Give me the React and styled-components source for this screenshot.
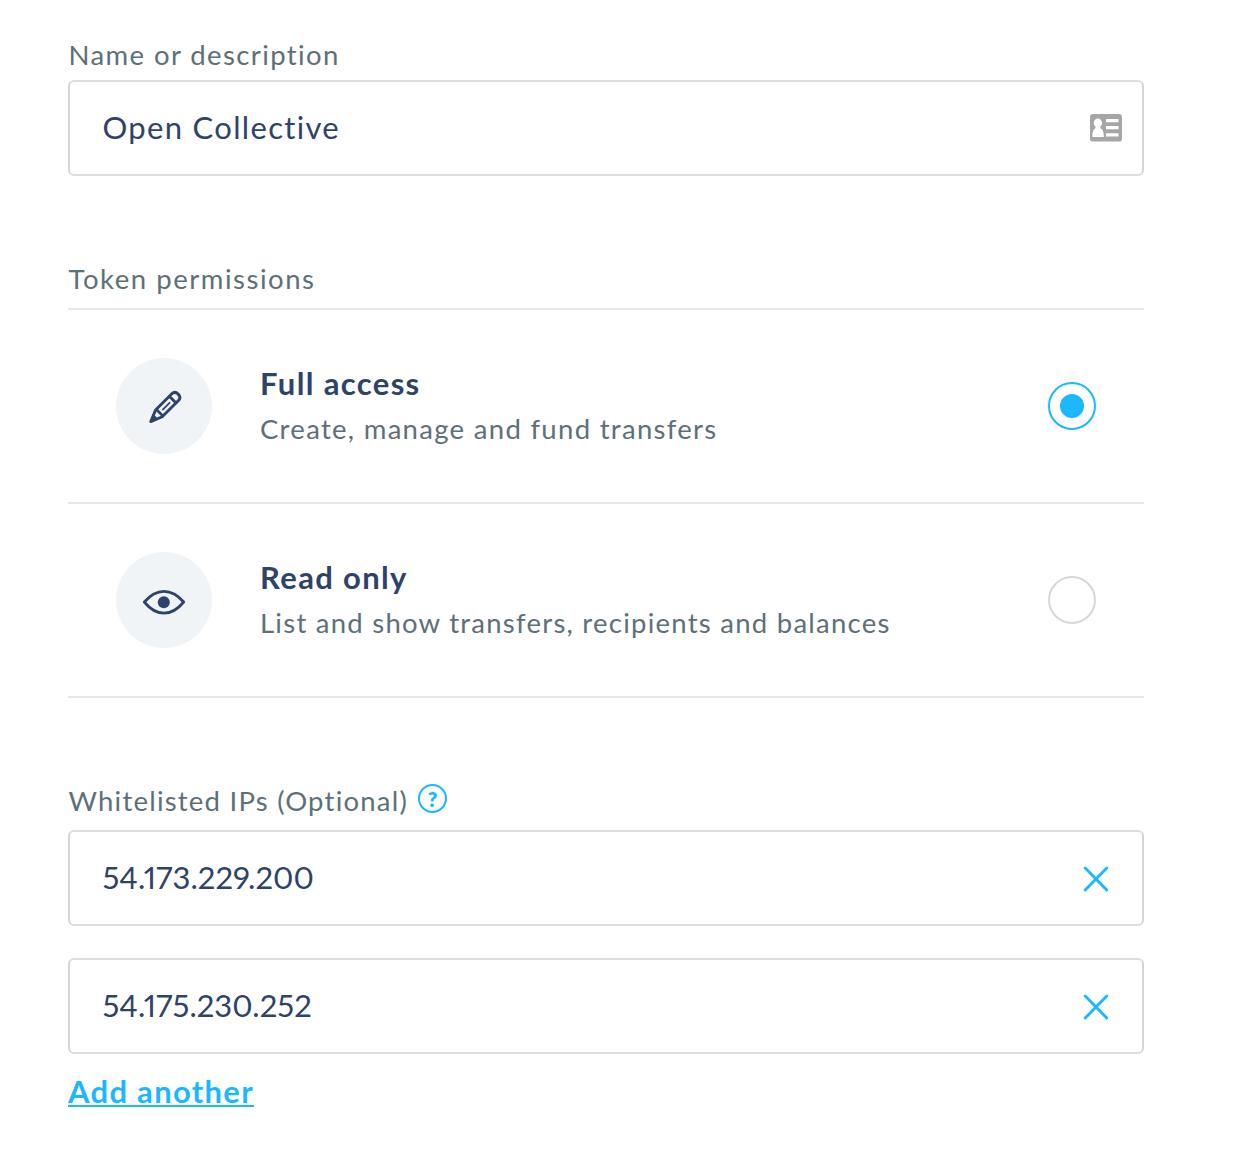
import React, { useState } from 'react';
import styled, { createGlobalStyle } from 'styled-components';

const navy = '#2e4369';
const slate = '#5d7079';
const sky = '#1cb8ff';

const GlobalStyle = createGlobalStyle`
  *, *::before, *::after { box-sizing: border-box; }
  body {
    margin: 0;
    background: #fff;
    color: ${navy};
    font-family: Lato, 'Open Sans', sans-serif;
  }
`;

const Form = styled.form`
  width: 1144px;
  padding: 30px 0 0 68px;
`;

const Section = styled.section`
  padding-bottom: 78px;
`;

const Label = styled.div`
  display: flex;
  align-items: center;
  gap: 10px;
  height: 48px;
  margin-bottom: ${(p) => p.$gap}px;
  padding-left: 0.5px;
  color: ${slate};
  font-size: 27.5px;
  letter-spacing: ${(p) => p.$track}px;
  white-space: nowrap;
`;

const Field = styled.div`
  display: flex;
  align-items: center;
  justify-content: space-between;
  height: 96px;
  padding: 0 ${(p) => p.$end}px 0 32.5px;
  border: 2px solid #dcdee1;
  border-left-color: #d3d5da;
  border-right-color: #d3d5da;
  border-radius: 6px;

  & + & {
    margin-top: 32px;
  }
`;

const FieldText = styled.span`
  padding-bottom: 2px;
  font-size: 31px;
  line-height: 40px;
  letter-spacing: ${(p) => p.$track}px;
  font-feature-settings: 'pnum';
`;

const OptionList = styled.div`
  border-bottom: 2px solid #e4e8e9;
`;

const Option = styled.label`
  display: flex;
  align-items: center;
  gap: 48px;
  height: 194px;
  padding: 0 48px;
  border-top: 2px solid #e4e8e9;
  cursor: pointer;
`;

const IconDisc = styled.span`
  display: flex;
  align-items: center;
  justify-content: center;
  width: 96px;
  height: 96px;
  border-radius: 50%;
  background: #f0f4f7;
`;

const OptionText = styled.span`
  display: flex;
  flex: 1;
  flex-direction: column;
  white-space: nowrap;
`;

const OptionTitle = styled.span`
  font-size: 31px;
  font-weight: 700;
  line-height: 46px;
  letter-spacing: 1.35px;
`;

const OptionDetail = styled.span`
  color: ${slate};
  font-size: 27.5px;
  line-height: 46px;
  letter-spacing: ${(p) => p.$track}px;
`;

const Radio = styled.span`
  display: flex;
  align-items: center;
  justify-content: center;
  width: 48px;
  height: 48px;
  border: 2px solid ${(p) => (p.$on ? sky : '#d5d7db')};
  border-radius: 50%;

  &::after {
    content: '';
    width: 24px;
    height: 24px;
    border-radius: 50%;
    background: ${(p) => (p.$on ? sky : 'transparent')};
  }
`;

const Help = styled.span`
  display: flex;
  align-items: center;
  justify-content: center;
  width: 29px;
  height: 29px;
  margin-bottom: 3px;
  border: 2px solid ${sky};
  border-radius: 50%;
  color: ${sky};
  font-size: 21px;
  font-weight: 800;
  line-height: 1;
  letter-spacing: 0;
`;

const IconButton = styled.button`
  display: flex;
  padding: 0;
  border: 0;
  background: none;
  cursor: pointer;
`;

const AddLink = styled.a`
  display: inline-block;
  margin-top: 14px;
  color: ${sky};
  font-size: 31px;
  font-weight: 700;
  line-height: 46px;
  letter-spacing: 1.3px;
  text-decoration: underline;
  text-decoration-thickness: 2px;
  text-underline-offset: 2px;
  text-decoration-skip-ink: none;
`;

const ContactCardIcon = () => (
  <svg width="32" height="28" viewBox="0 0 32 28">
    <rect width="32" height="27.6" rx="3.2" fill="#a6a6a6" />
    <g fill="#fff">
      <ellipse cx="7.9" cy="9" rx="4.2" ry="4.4" />
      <path d="M5.5 11h4.8v3.2c2.6 1 3.5 3.2 3.500 8.800H2.400c0-5.600 1-7.800 3.100-8.800z" />
      <path d="M16 5h12.5v3.2H16zM16 12h12.5v3.2H16zM16 19.2h12.5v3.2H16z" />
    </g>
  </svg>
);

const PencilIcon = () => (
  <svg width="36" height="36" viewBox="0 0 36 36" fill="none" stroke={navy} strokeLinejoin="round">
    <g transform="translate(3.7 34.6) rotate(-45)">
      <path d="M1.5 0 13 -4.7H36Q40.3 -4.7 40.3 0T36 4.7H13Z" strokeWidth="2.9" />
      <path d="M1 0 8 -2.7V2.7Z" fill={navy} strokeWidth="1.2" />
      <path d="M14 -4.5V4.5M32.5 -4.5V4.5" strokeWidth="2.8" />
      <path d="M18.5 0H28" strokeWidth="1.8" strokeLinecap="round" />
    </g>
  </svg>
);

const EyeIcon = () => (
  <svg width="44" height="30" viewBox="0 0 44 30">
    <path
      d="M2.3 17C8.5 9.8 15 6.3 22 6.3S35.5 9.8 41.7 17C35.5 24.6 29 28.1 22 28.1S8.5 24.6 2.3 17Z"
      fill="none"
      stroke={navy}
      strokeWidth="2.8"
      strokeLinejoin="round"
    />
    <circle cx="21.8" cy="17.2" r="6" fill={navy} />
  </svg>
);

const CrossIcon = () => (
  <svg width="26" height="28" viewBox="0 0 26 28">
    <path d="M2.2 4 23.8 26M23.8 4 2.2 26" stroke={sky} strokeWidth="2.9" strokeLinecap="round" />
  </svg>
);

const permissions = [
  { id: 'full', title: 'Full access', detail: 'Create, manage and fund transfers', track: 1.3, Icon: PencilIcon },
  { id: 'read', title: 'Read only', detail: 'List and show transfers, recipients and balances', track: 1.25, Icon: EyeIcon },
];

export default function App() {
  const [selected, setSelected] = useState('full');
  const [ips, setIps] = useState(['54.173.229.200', '54.175.230.252']);

  return (
    <>
      <GlobalStyle />
      <Form>
        <Section>
          <Label $gap={2} $track={1.4}>Name or description</Label>
          <Field $end={20}>
            <FieldText $track={1.32}>Open Collective</FieldText>
            <ContactCardIcon />
          </Field>
        </Section>

        <Section>
          <Label $gap={6} $track={1.53}>Token permissions</Label>
          <OptionList>
            {permissions.map(({ id, title, detail, track, Icon }) => (
              <Option key={id} onClick={() => setSelected(id)}>
                <IconDisc><Icon /></IconDisc>
                <OptionText>
                  <OptionTitle>{title}</OptionTitle>
                  <OptionDetail $track={track}>{detail}</OptionDetail>
                </OptionText>
                <Radio $on={selected === id} />
              </Option>
            ))}
          </OptionList>
        </Section>

        <Label $gap={6} $track={1.22}>
          Whitelisted IPs (Optional)
          <Help>?</Help>
        </Label>
        {ips.map((ip) => (
          <Field key={ip} $end={33}>
            <FieldText $track={0.02}>{ip}</FieldText>
            <IconButton type="button" onClick={() => setIps(ips.filter((item) => item !== ip))}>
              <CrossIcon />
            </IconButton>
          </Field>
        ))}
        <AddLink>Add another</AddLink>
      </Form>
    </>
  );
}
